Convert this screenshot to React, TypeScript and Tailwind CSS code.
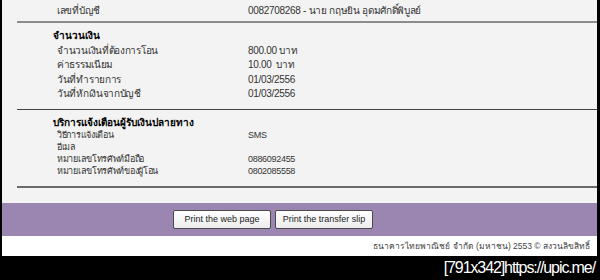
import React from 'react';

const amountRows = [
  { label: 'จำนวนเงินที่ต้องการโอน', value: '800.00 บาท' },
  { label: 'ค่าธรรมเนียม', value: '10.00  บาท' },
  { label: 'วันที่ทำรายการ', value: '01/03/2556' },
  { label: 'วันที่หักเงินจากบัญชี', value: '01/03/2556' },
];

const notifyRows = [
  { label: 'วิธีการแจ้งเตือน', value: 'SMS' },
  { label: 'อีเมล', value: '' },
  { label: 'หมายเลขโทรศัพท์มือถือ', value: '0886092455' },
  { label: 'หมายเลขโทรศัพท์ของผู้โอน', value: '0802085558' },
];

const font = "font-['Tahoma','Liberation_Sans','Noto_Sans',sans-serif]";

const App: React.FC = () => {
  return (
    <div className={`w-[600px] h-[280px] bg-black flex flex-col pl-[2px] pr-[3px] ${font}`}>
      {/* Details panel */}
      <div className="bg-[#f3f3f3] h-[205px] flex flex-col text-[#333]">
        <div className="flex h-[21px] items-center text-[10px] tracking-[-0.3px]">
          <span className="w-[246px] pl-[55px]">เลขที่บัญชี</span>
          <span>0082708268 - นาย กฤษยิน อุดมศักดิ์พิบูลย์</span>
        </div>
        <div className="ml-[15px] h-[2px] bg-[#8c8c8c]" />

        <div className="pl-[51px] pt-[5px] text-[10px] font-bold text-black h-[20px] flex items-center">
          จำนวนเงิน
        </div>
        <div className="flex flex-col">
          {amountRows.map((r) => (
            <div key={r.label} className="flex h-[14.5px] items-center text-[10px] tracking-[-0.3px]">
              <span className="w-[246px] pl-[55px]">{r.label}</span>
              <span className="whitespace-pre">{r.value}</span>
            </div>
          ))}
        </div>
        <div className="ml-[15px] mt-[8px] h-px bg-[#444]" />

        <div className="pl-[51px] pt-[4px] text-[10px] font-bold text-black h-[20px] flex items-center">
          บริการแจ้งเตือนผู้รับเงินปลายทาง
        </div>
        <div className="flex flex-col">
          {notifyRows.map((r) => (
            <div key={r.label} className="flex h-[12px] items-center text-[9px] tracking-[-0.3px]">
              <span className="w-[246px] pl-[55px]">{r.label}</span>
              <span>{r.value}</span>
            </div>
          ))}
        </div>
        <div className="ml-[15px] mt-[8px] h-[2px] bg-[#6a6a6a]" />
      </div>

      {/* Button bar */}
      <div className="bg-[#9b85b1] h-[34px] flex items-center gap-[4px] pl-[171px]">
        <button className="w-[98px] h-[19px] rounded-[2px] border border-[#4a4a4a] bg-gradient-to-b from-white to-[#ececec] text-[9px] text-[#222]">
          Print the web page
        </button>
        <button className="w-[98px] h-[19px] rounded-[2px] border border-[#4a4a4a] bg-gradient-to-b from-white to-[#ececec] text-[9px] text-[#222]">
          Print the transfer slip
        </button>
      </div>

      {/* Footer */}
      <div className="bg-white h-[20px] flex items-center justify-end pr-[7px] text-[8.5px] text-[#444]">
        ธนาคารไทยพาณิชย์ จำกัด (มหาชน) 2553 © สงวนลิขสิทธิ์
      </div>

      <div className="flex-1 flex items-center justify-end pr-[2px] text-white text-[16px] tracking-[-1.1px] font-['Liberation_Sans',sans-serif]">
        [791x342]https://upic.me/
      </div>
    </div>
  );
};

export default App;
